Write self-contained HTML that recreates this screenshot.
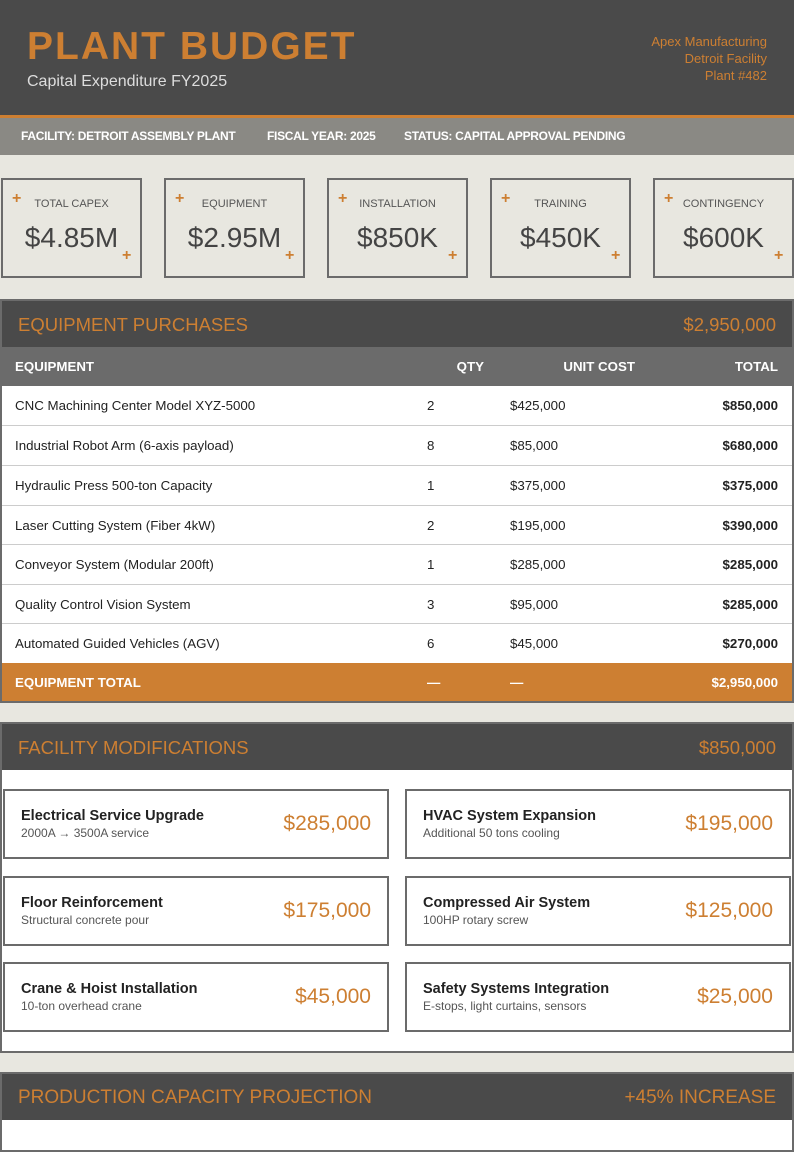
<!DOCTYPE html>
<html><head><meta charset="utf-8"><style>
*{margin:0;padding:0;box-sizing:border-box}
body{width:794px;height:1123px;overflow:hidden;background:#e8e7e0;font-family:"Liberation Sans",Arial,sans-serif;position:relative}
.abs{position:absolute}
.hdr{left:0;top:0;width:794px;height:115px;background:#4a4a4a}
.title{left:27px;top:25px;font-size:39px;font-weight:bold;color:#cd7f32;letter-spacing:2px}
.sub{left:27px;top:73px;font-size:16px;color:#ddd}
.co{right:27px;top:33px;text-align:right;color:#cd7f32;font-size:13px;line-height:17px}
.oline{left:0;top:115px;width:794px;height:3px;background:#cd7f32}
.info{left:0;top:118px;width:794px;height:37px;background:#8a8984;color:#fff;font-size:12px;font-weight:bold;letter-spacing:-0.3px}
.info span{position:absolute;top:11px}
.card{top:178px;width:141px;height:100px;border:2px solid #6b6b6b;background:#e8e7e0;text-align:center}
.card .l{position:absolute;top:18px;left:0;right:0;font-size:11px;color:#555}
.card .v{position:absolute;top:42px;left:0;right:0;font-size:28px;color:#444}
.card .p1{position:absolute;left:9px;top:12px;color:#cd7f32;font-weight:bold;font-size:16px;line-height:14px}
.card .p2{position:absolute;left:119px;top:69px;color:#cd7f32;font-weight:bold;font-size:16px;line-height:14px}
.sec{left:0;width:794px;border:2px solid #6b6b6b;background:#fff}
.sh{position:absolute;left:0;right:0;top:0;height:46px;background:#4a4a4a;color:#cd7f32;font-size:18.5px}
.sh .a{position:absolute;left:16px;top:13px}
.sh .b{position:absolute;right:16px;top:13px}
.row{position:absolute;left:0;right:0;height:40px;font-size:13.3px;color:#222;border-top:1px solid #ccc}
.row span{position:absolute;top:12px}
.th{background:#6b6b6b;color:#fff;font-weight:bold;border:none}
.tot{background:#cd7f32;color:#fff;font-weight:bold;border:none}
.fc{position:absolute;width:386px;height:70px;border:2px solid #6b6b6b;background:#fff}
.fc .n{position:absolute;left:16px;top:17px;font-size:14.5px;font-weight:bold;color:#222}
.fc .d{position:absolute;left:16px;top:35px;font-size:12px;color:#555}
.fc .m{position:absolute;right:16px;top:21px;font-size:21px;color:#cd7f32}
</style></head><body>
<div class="abs hdr"></div>
<div class="abs title">PLANT BUDGET</div>
<div class="abs sub">Capital Expenditure FY2025</div>
<div class="abs co">Apex Manufacturing<br>Detroit Facility<br>Plant #482</div>
<div class="abs oline"></div>
<div class="abs info"><span style="left:21px">FACILITY: DETROIT ASSEMBLY PLANT</span><span style="left:267px">FISCAL YEAR: 2025</span><span style="left:404px">STATUS: CAPITAL APPROVAL PENDING</span></div>

<div class="abs card" style="left:1px"><span class="p1">+</span><div class="l">TOTAL CAPEX</div><div class="v">$4.85M</div><span class="p2">+</span></div>
<div class="abs card" style="left:164px"><span class="p1">+</span><div class="l">EQUIPMENT</div><div class="v">$2.95M</div><span class="p2">+</span></div>
<div class="abs card" style="left:327px"><span class="p1">+</span><div class="l">INSTALLATION</div><div class="v">$850K</div><span class="p2">+</span></div>
<div class="abs card" style="left:490px"><span class="p1">+</span><div class="l">TRAINING</div><div class="v">$450K</div><span class="p2">+</span></div>
<div class="abs card" style="left:653px"><span class="p1">+</span><div class="l">CONTINGENCY</div><div class="v">$600K</div><span class="p2">+</span></div>

<div class="abs sec" style="top:299px;height:404px">
<div class="sh"><span class="a">EQUIPMENT PURCHASES</span><span class="b">$2,950,000</span></div>
<div class="row th" style="top:46px;height:39px"><span style="left:13px">EQUIPMENT</span><span style="right:308px">QTY</span><span style="right:157px">UNIT COST</span><span style="right:14px">TOTAL</span></div>
<div class="row" style="top:85px;border:none"><span style="left:13px">CNC Machining Center Model XYZ-5000</span><span style="left:425px">2</span><span style="left:508px">$425,000</span><span style="right:14px;font-weight:bold">$850,000</span></div>
<div class="row" style="top:124px"><span style="left:13px">Industrial Robot Arm (6-axis payload)</span><span style="left:425px">8</span><span style="left:508px">$85,000</span><span style="right:14px;font-weight:bold">$680,000</span></div>
<div class="row" style="top:164px"><span style="left:13px">Hydraulic Press 500-ton Capacity</span><span style="left:425px">1</span><span style="left:508px">$375,000</span><span style="right:14px;font-weight:bold">$375,000</span></div>
<div class="row" style="top:204px"><span style="left:13px">Laser Cutting System (Fiber 4kW)</span><span style="left:425px">2</span><span style="left:508px">$195,000</span><span style="right:14px;font-weight:bold">$390,000</span></div>
<div class="row" style="top:243px"><span style="left:13px">Conveyor System (Modular 200ft)</span><span style="left:425px">1</span><span style="left:508px">$285,000</span><span style="right:14px;font-weight:bold">$285,000</span></div>
<div class="row" style="top:283px"><span style="left:13px">Quality Control Vision System</span><span style="left:425px">3</span><span style="left:508px">$95,000</span><span style="right:14px;font-weight:bold">$285,000</span></div>
<div class="row" style="top:322px"><span style="left:13px">Automated Guided Vehicles (AGV)</span><span style="left:425px">6</span><span style="left:508px">$45,000</span><span style="right:14px;font-weight:bold">$270,000</span></div>
<div class="row tot" style="top:362px;height:38px"><span style="left:13px">EQUIPMENT TOTAL</span><span style="left:425px">—</span><span style="left:508px">—</span><span style="right:14px">$2,950,000</span></div>
</div>

<div class="abs sec" style="top:722px;height:331px">
<div class="sh"><span class="a">FACILITY MODIFICATIONS</span><span class="b">$850,000</span></div>
<div class="fc" style="left:1px;top:65px"><div class="n">Electrical Service Upgrade</div><div class="d">2000A → 3500A service</div><div class="m">$285,000</div></div>
<div class="fc" style="left:403px;top:65px"><div class="n">HVAC System Expansion</div><div class="d">Additional 50 tons cooling</div><div class="m">$195,000</div></div>
<div class="fc" style="left:1px;top:152px"><div class="n">Floor Reinforcement</div><div class="d">Structural concrete pour</div><div class="m">$175,000</div></div>
<div class="fc" style="left:403px;top:152px"><div class="n">Compressed Air System</div><div class="d">100HP rotary screw</div><div class="m">$125,000</div></div>
<div class="fc" style="left:1px;top:238px"><div class="n">Crane &amp; Hoist Installation</div><div class="d">10-ton overhead crane</div><div class="m">$45,000</div></div>
<div class="fc" style="left:403px;top:238px"><div class="n">Safety Systems Integration</div><div class="d">E-stops, light curtains, sensors</div><div class="m">$25,000</div></div>
</div>

<div class="abs sec" style="top:1072px;height:80px">
<div class="sh" style="font-size:19px"><span class="a">PRODUCTION CAPACITY PROJECTION</span><span class="b">+45% INCREASE</span></div>
</div>
</body></html>
